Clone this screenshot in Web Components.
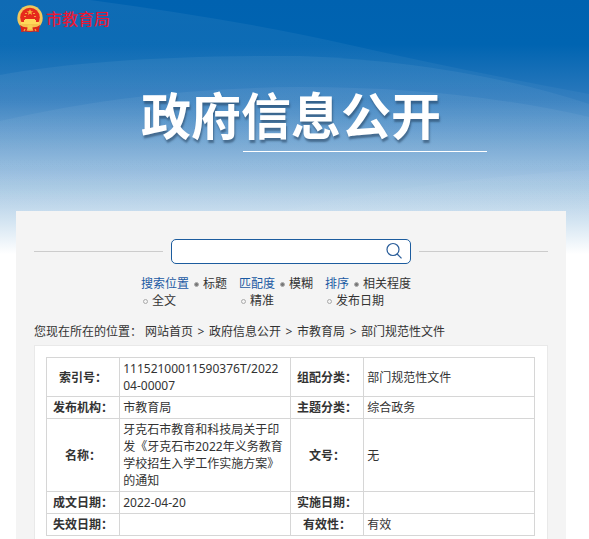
<!DOCTYPE html>
<html lang="zh-CN">
<head>
<meta charset="UTF-8">
<meta name="viewport" content="width=device-width, initial-scale=1">
<title>政府信息公开</title>
<style>
  body {
    margin: 0;
    background: #fff;
    color: #333;
    font: 12px/17px "Noto Sans", "Noto Sans CJK SC", sans-serif;
  }
</style>
</head>
<body>
<gov-page>
  <site-brand slot="brand">市教育局</site-brand>
  <page-title slot="title">政府信息公开</page-title>
  <search-panel>
    <filter-group name="place" options="标题,全文">搜索位置</filter-group>
    <filter-group name="match" options="模糊,精准">匹配度</filter-group>
    <filter-group name="sort" options="相关程度,发布日期">排序</filter-group>
  </search-panel>
  <crumb-trail items="网站首页,政府信息公开,市教育局,部门规范性文件">您现在所在的位置：</crumb-trail>
  <doc-info></doc-info>
</gov-page>

<script>
  // 页面框架：背景 + 标题 + 灰色内容区
  class GovPage extends HTMLElement {
    constructor() {
      super();
      this.attachShadow({ mode: "open" }).innerHTML = `
        <style>
          :host { display: grid; min-height: 100vh; grid-template-rows: auto; }
          .bg, .content { grid-area: 1 / 1; min-width: 0; }
          .bg { width: 100%; height: 262px; display: block; }
          .content { display: flex; flex-direction: column; padding: 0 23px 0 16px; }
          header { height: 211px; }
          main {
            flex: 1;
            background: #f4f4f4;
            padding: 28px 18px 0;
          }
        </style>
        <svg class="bg" viewBox="0 0 589 262" preserveAspectRatio="none" aria-hidden="true">
          <defs>
            <linearGradient id="sky" x1="0" y1="0" x2="0" y2="1">
              <stop offset="0" stop-color="#0062b0"/>
              <stop offset=".17" stop-color="#0064b1"/>
              <stop offset=".38" stop-color="#2d7abd"/>
              <stop offset=".57" stop-color="#76a8d4"/>
              <stop offset=".8" stop-color="#c4dbed"/>
              <stop offset=".97" stop-color="#fff"/>
            </linearGradient>
            <linearGradient id="glow" x1="0" y1="0" x2="0" y2="1">
              <stop offset="0" stop-color="#fff" stop-opacity=".06"/>
              <stop offset="1" stop-color="#fff" stop-opacity="0"/>
            </linearGradient>
          </defs>
          <rect width="589" height="262" fill="url(#sky)"/>
          <path d="M0 0H90Q240 20 350 45T589 94V262H0Z" fill="url(#glow)"/>
          <path d="M0 75Q110 55 300 56Q460 62 589 104V230H0Z" fill="url(#glow)"/>
          <path d="M0 121Q140 88 300 87Q460 87 589 117V220H0Z" fill="url(#glow)"/>
          <path d="M260 215Q420 180 589 170V240H260Z" fill="url(#glow)" opacity=".6"/>
        </svg>
        <div class="content">
          <header>
            <slot name="brand"></slot>
            <slot name="title"></slot>
          </header>
          <main><slot></slot></main>
        </div>
      `;
    }
  }

  // 国徽 + 单位名称
  class SiteBrand extends HTMLElement {
    constructor() {
      super();
      this.attachShadow({ mode: "open" }).innerHTML = `
        <style>
          :host { display: block; padding-top: 5px; }
          a {
            display: inline-flex;
            align-items: center;
            gap: 2px;
            color: #ec1730;
            font-size: 16px;
            line-height: 28px;
            text-decoration: none;
            text-shadow: 0 0 1px #a63f80;
          }
          svg { width: 28px; height: 28px; }
        </style>
        <a href="#">
          <svg viewBox="0 0 28 28" aria-hidden="true">
            <path d="M6 19L5 27L9 26.500L14 27L19 26.500L23 27L22 19Z" fill="#dd2419"/>
            <circle cx="14" cy="13" r="12.700" fill="#f2c85c"/>
            <circle cx="14" cy="12.500" r="9.800" fill="#e62a1c"/>
            <path d="M14 4l1 2.200h2.300l-1.900 1.400.7 2.300-2.100-1.400-2.100 1.400.7-2.300-1.900-1.400H13Z" fill="#f6b03c"/>
            <path d="M9 8h2v1H9zM17 8h2v1h-2zM8 11h2v1H8zM18 11h2v1h-2z" fill="#f6a03c"/>
            <path d="M9 14h10v1h1v2h3v2H5v-2h3v-2h1Z" fill="#ffd95a"/>
            <path d="M6 19h16l-2 3h-4l-2-1-2 1H8Z" fill="#f6c24c"/>
            <path d="M4 20Q8 23 12 22L11 25L5 25ZM24 20Q20 23 16 22L17 25L23 25Z" fill="#dd2419"/>
            <circle cx="14" cy="22" r="2.600" fill="#f7cf52"/>
            <path d="M9 24l-1 2M19 24l1 2M11 25h6" stroke="#f3ae3c" stroke-width="1.200"/>
          </svg>
          <slot></slot>
        </a>
      `;
    }
  }

  class PageTitle extends HTMLElement {
    constructor() {
      super();
      this.attachShadow({ mode: "open" }).innerHTML = `
        <style>
          :host { display: block; padding-top: 46px; }
          .box { width: max-content; margin: 0 auto; }
          h1 {
            margin: 0;
            color: #fff;
            font-size: 50px;
            line-height: 66px;
            font-weight: 700;
            text-shadow: 1px 3px 2px rgba(40, 70, 100, .6);
          }
          /* 下划线从第三个字开始，超出标题右侧 */
          hr {
            width: 244px;
            height: 1px;
            margin: 2px -46px 0 102px;
            border: 0;
            background: #fff;
          }
        </style>
        <div class="box">
          <h1><slot></slot></h1>
          <hr>
        </div>
      `;
    }
  }

  class SearchPanel extends HTMLElement {
    constructor() {
      super();
      this.attachShadow({ mode: "open" }).innerHTML = `
        <style>
          :host { display: block; }
          form {
            display: grid;
            grid-template-columns: 1fr 240px 1fr;
            gap: 11px 8px;
            align-items: center;
          }
          .line { height: 1px; background: #ccc; }
          .field {
            display: flex;
            box-sizing: border-box;
            height: 25px;
            border: 1px solid #1c5c9e;
            border-radius: 5px;
            background: #fff;
          }
          input {
            flex: 1;
            min-width: 0;
            border: 0;
            padding: 0 8px;
            background: none;
            font: inherit;
            outline: none;
          }
          button {
            display: flex;
            border: 0;
            padding: 2px 7px;
            background: none;
            cursor: pointer;
          }
          svg { width: 18px; height: 18px; }
          .filters {
            grid-column: 1 / 3;
            justify-self: end;
            display: flex;
            gap: 12px;
          }
        </style>
        <form role="search">
          <span class="line"></span>
          <div class="field">
            <input type="text" aria-label="搜索">
            <button type="button" aria-label="搜索">
              <svg viewBox="0 0 18 18" fill="none" stroke="#285c99" stroke-width="1.200" aria-hidden="true">
                <circle cx="8" cy="7.500" r="6"/>
                <path d="M12.200 12L16.500 16.300"/>
              </svg>
            </button>
          </div>
          <span class="line"></span>
          <div class="filters"><slot></slot></div>
        </form>
      `;
    }
  }

  class FilterGroup extends HTMLElement {
    constructor() {
      super();
      const name = this.getAttribute("name");
      const [first, second] = this.getAttribute("options").split(",");
      this.attachShadow({ mode: "open" }).innerHTML = `
        <style>
          :host { display: block; }
          .group { display: grid; grid-template-columns: auto auto; column-gap: 3px; }
          .name { color: #1b5aa3; }
          label { display: flex; align-items: center; }
          label.second { grid-column: 1 / 3; }
          input {
            appearance: none;
            box-sizing: border-box;
            width: 5px;
            height: 5px;
            margin: 2px 4px 0 2px;
            border: 1px solid #aaa;
            border-radius: 50%;
          }
          input:checked { background: #777; }
        </style>
        <div class="group" role="radiogroup" aria-labelledby="name">
          <span class="name" id="name"><slot></slot></span>
          <label><input type="radio" name="${name}" checked>${first}</label>
          <label class="second"><input type="radio" name="${name}">${second}</label>
        </div>
      `;
    }
  }

  class CrumbTrail extends HTMLElement {
    constructor() {
      super();
      const links = this.getAttribute("items").split(",")
        .map((item) => `<a href="#">${item}</a>`)
        .join(`<span class="sep">&gt;</span>`);
      this.attachShadow({ mode: "open" }).innerHTML = `
        <style>
          :host { display: block; padding: 14px 0 5px; }
          nav { display: flex; flex-wrap: wrap; }
          .label { margin-right: 3px; }
          .sep { width: 16px; text-align: center; }
          a { color: inherit; text-decoration: none; }
          a:hover { color: #1b5aa3; }
        </style>
        <nav>
          <span class="label"><slot></slot></span>
          ${links}
        </nav>
      `;
    }
  }

  // 文件基本信息表
  class DocInfo extends HTMLElement {
    constructor() {
      super();
      this.attachShadow({ mode: "open" }).innerHTML = `
        <style>
          :host {
            display: block;
            border: 1px solid #e9e9e9;
            background: #fff;
            padding: 11px 12px 11px 11px;
          }
          table {
            width: 100%;
            table-layout: fixed;
            border-collapse: collapse;
          }
          th, td {
            height: 17px;
            padding: 2px 3px;
            border: 1px solid #d6d6d6;
            text-align: left;
          }
          th { text-align: center; }
          .narrow { width: 15%; }
          .wide { width: 35%; }
        </style>
        <table>
          <colgroup>
            <col class="narrow"><col class="wide"><col class="narrow"><col class="wide">
          </colgroup>
          <tr>
            <th scope="row">索引号：</th><td>11152100011590376T/2022<wbr>04-00007</td>
            <th scope="row">组配分类：</th><td>部门规范性文件</td>
          </tr>
          <tr>
            <th scope="row">发布机构：</th><td>市教育局</td>
            <th scope="row">主题分类：</th><td>综合政务</td>
          </tr>
          <tr>
            <th scope="row">名称：</th><td>牙克石市教育和科技局关于印发《牙克石市2022年义务教育学校招生入学工作实施方案》的通知</td>
            <th scope="row">文号：</th><td>无</td>
          </tr>
          <tr>
            <th scope="row">成文日期：</th><td>2022-04-20</td>
            <th scope="row">实施日期：</th><td></td>
          </tr>
          <tr>
            <th scope="row">失效日期：</th><td></td>
            <th scope="row">有效性：</th><td>有效</td>
          </tr>
        </table>
      `;
    }
  }

  customElements.define("gov-page", GovPage);
  customElements.define("site-brand", SiteBrand);
  customElements.define("page-title", PageTitle);
  customElements.define("search-panel", SearchPanel);
  customElements.define("filter-group", FilterGroup);
  customElements.define("crumb-trail", CrumbTrail);
  customElements.define("doc-info", DocInfo);
</script>
</body>
</html>
